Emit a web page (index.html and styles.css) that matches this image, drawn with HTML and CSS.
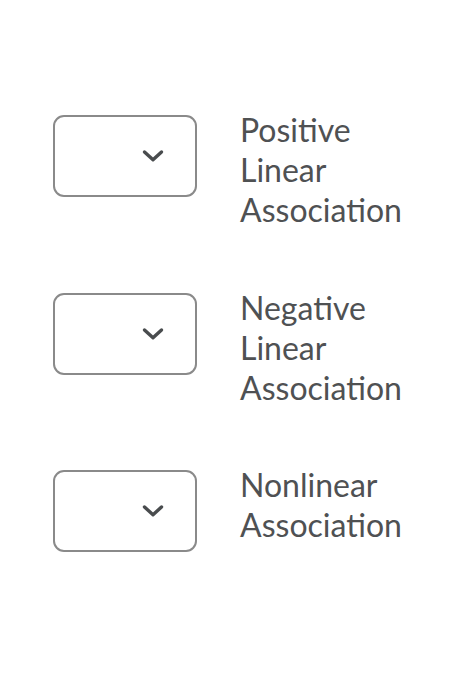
FILE: index.html
```html
<!DOCTYPE html>
<html lang="en">
<head>
    <meta charset="UTF-8">
    <meta name="viewport" content="width=device-width, initial-scale=1.0">
    <title>Match the associations</title>
    <link rel="stylesheet" href="styles.css">
</head>
<body>
    <div class="matching">
        <div class="match-row">
            <div class="select-box" role="combobox" aria-label="Positive Linear Association">
                <svg class="chevron" width="22" height="14" viewBox="0 0 22 14" aria-hidden="true">
                    <path d="M2.5 3 L11 10.8 L19.5 3" fill="none" stroke="#494c4e" stroke-width="3.4" stroke-linecap="round" stroke-linejoin="round"/>
                </svg>
            </div>
            <div class="match-label">Positive<br>Linear<br>Association</div>
        </div>

        <div class="match-row">
            <div class="select-box" role="combobox" aria-label="Negative Linear Association">
                <svg class="chevron" width="22" height="14" viewBox="0 0 22 14" aria-hidden="true">
                    <path d="M2.5 3 L11 10.8 L19.5 3" fill="none" stroke="#494c4e" stroke-width="3.4" stroke-linecap="round" stroke-linejoin="round"/>
                </svg>
            </div>
            <div class="match-label">Negative<br>Linear<br>Association</div>
        </div>

        <div class="match-row">
            <div class="select-box" role="combobox" aria-label="Nonlinear Association">
                <svg class="chevron" width="22" height="14" viewBox="0 0 22 14" aria-hidden="true">
                    <path d="M2.5 3 L11 10.8 L19.5 3" fill="none" stroke="#494c4e" stroke-width="3.4" stroke-linecap="round" stroke-linejoin="round"/>
                </svg>
            </div>
            <div class="match-label">Nonlinear<br>Association</div>
        </div>
    </div>
</body>
</html>
```

FILE: styles.css
```css
body {
    margin: 0;
    background: #ffffff;
    font-family: Lato, 'Open Sans', sans-serif;
    color: #4f5153;
}

.matching {
    display: flex;
    flex-direction: column;
    gap: 57.5px;
    padding: 110px 0 0 53px;
}

.match-row {
    display: flex;
    align-items: flex-start;
    gap: 43px;
}

.select-box {
    width: 144px;
    height: 82px;
    margin-top: 5px;
    box-sizing: border-box;
    border: 2px solid #8a8a8a;
    border-radius: 11px;
    background: #ffffff;
    display: flex;
    align-items: center;
    padding-left: 87px;
}

.chevron {
    display: block;
}

.match-label {
    font-size: 32px;
    line-height: 40px;
}
```
